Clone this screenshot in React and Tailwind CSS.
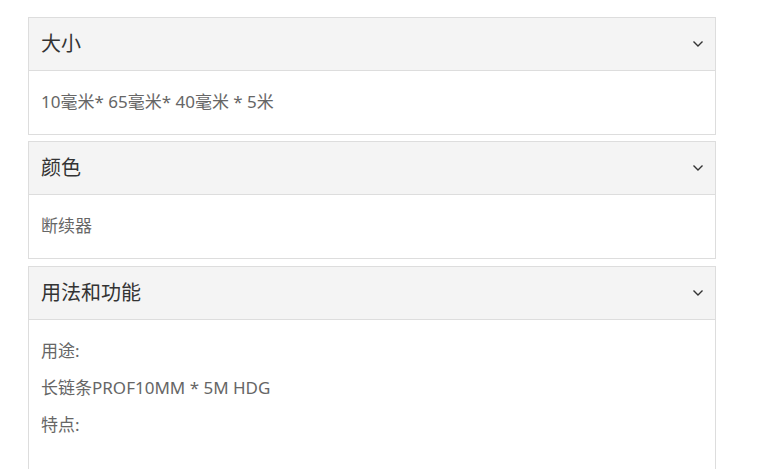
import React from "react";

const Chevron = () => (
  <svg width="12" height="8" viewBox="0 0 12 8" fill="none" className="block">
    <path d="M1.5 1.5 L6 6 L10.5 1.5" stroke="#333" strokeWidth="1.4" />
  </svg>
);

const Card = ({ title, children, className = "" }) => (
  <div className={"border border-[#dddddd] bg-white " + className}>
    <div className="flex h-[53px] items-center justify-between border-b border-[#dddddd] bg-[#f4f4f4] pl-3 pr-[11px]">
      <span className="text-[20px] text-[#333333]">{title}</span>
      <Chevron />
    </div>
    <div className="px-3 pt-[19px] pb-[20px] text-[17px] leading-6 text-[#666666]">{children}</div>
  </div>
);

export default function App() {
  return (
    <div
      className="h-[469px] w-[760px] overflow-hidden bg-white pl-[28px] pt-[17px]"
      style={{ fontFamily: '"Noto Sans", "Noto Sans CJK SC", sans-serif' }}
    >
      <div className="flex w-[688px] flex-col">
        <Card title="大小" className="mb-[6px]">
          <p>10毫米* 65毫米* 40毫米 * 5米</p>
        </Card>
        <Card title="颜色" className="mb-[7px]">
          <p>断续器</p>
        </Card>
        <Card title="用法和功能" className="h-[220px]">
          <div className="flex flex-col gap-[13px]">
            <p>用途:</p>
            <p>长链条PROF10MM * 5M HDG</p>
            <p>特点:</p>
          </div>
        </Card>
      </div>
    </div>
  );
}
